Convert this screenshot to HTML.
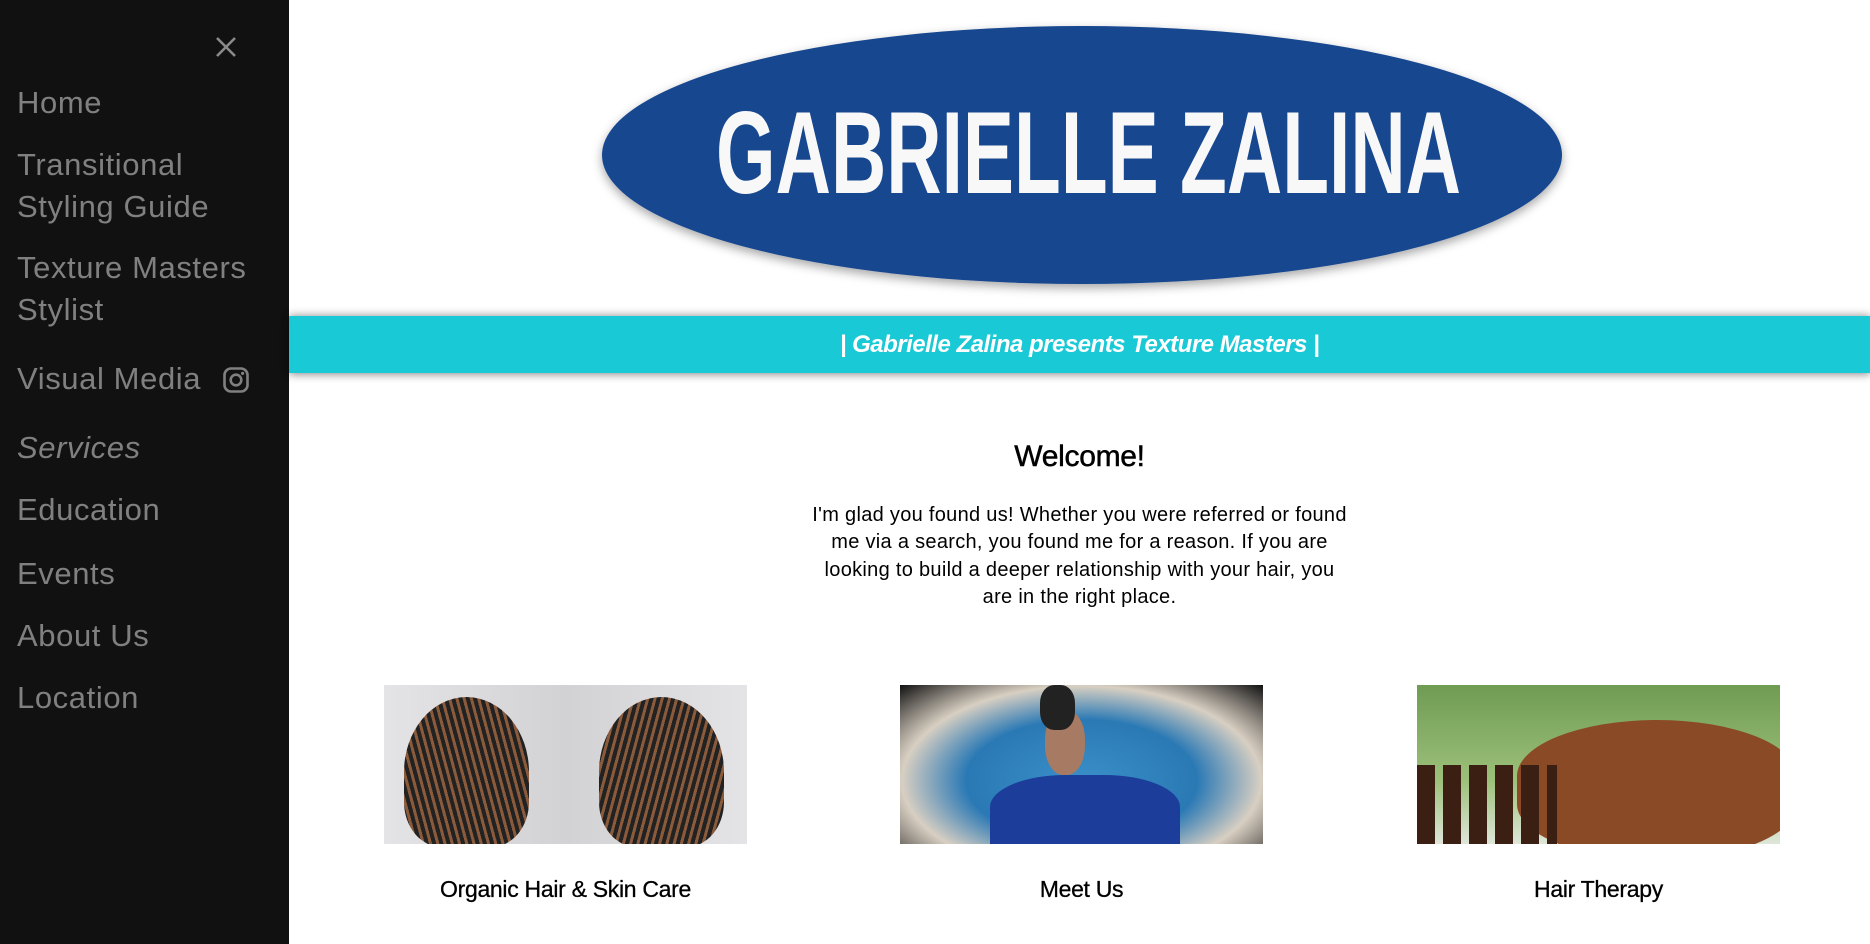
<!DOCTYPE html>
<html><head><meta charset="utf-8"><style>
*{margin:0;padding:0;box-sizing:border-box}
html,body{width:1870px;height:944px;overflow:hidden;background:#fff;font-family:"Liberation Sans",sans-serif}
#side{position:absolute;left:0;top:0;width:289px;height:944px;background:#111}
.m{position:absolute;left:17px;color:#808080;font-size:31px;line-height:42px;white-space:nowrap;letter-spacing:0.6px}
#bar{position:absolute;left:289px;top:316px;width:1581px;height:57px;background:#19c9d6;box-shadow:0 2px 8px rgba(0,0,0,.35),0 -2px 8px rgba(0,0,0,.2);color:#fff;font-style:italic;font-weight:bold;font-size:24px;text-align:center;line-height:57px;letter-spacing:-0.5px}
.c{position:absolute;left:289px;width:1581px;text-align:center;color:#000}
.img{position:absolute;top:685px;width:363px;height:159px;overflow:hidden}
.cap{position:absolute;top:876px;width:363px;text-align:center;font-size:23px;color:#000;letter-spacing:-0.3px;-webkit-text-stroke:0.3px #000}
</style></head><body>
<div id="side">
<svg style="position:absolute;left:215px;top:36px" width="22" height="22" viewBox="0 0 22 22"><path d="M2 2L20 20M20 2L2 20" stroke="#8a8a8a" stroke-width="2.6"/></svg>
<div class="m" style="top:82px">Home</div>
<div class="m" style="top:144px">Transitional<br>Styling Guide</div>
<div class="m" style="top:247px">Texture Masters<br>Stylist</div>
<div class="m" style="top:358px">Visual Media</div>
<svg style="position:absolute;left:223px;top:367px" width="26" height="26" viewBox="0 0 26 26"><rect x="1.5" y="1.5" width="23" height="23" rx="6.5" fill="none" stroke="#808080" stroke-width="2.6"/><circle cx="13" cy="13" r="5.3" fill="none" stroke="#808080" stroke-width="2.6"/><circle cx="19.6" cy="6.4" r="1.6" fill="#808080"/></svg>
<div class="m" style="top:427px;font-style:italic">Services</div>
<div class="m" style="top:489px">Education</div>
<div class="m" style="top:553px">Events</div>
<div class="m" style="top:615px">About Us</div>
<div class="m" style="top:677px">Location</div>
</div>
<svg style="position:absolute;left:590px;top:16px" width="990" height="290" viewBox="0 0 990 290">
<defs><filter id="f" x="-5%" y="-10%" width="110%" height="125%"><feDropShadow dx="0" dy="4" stdDeviation="5" flood-color="#000" flood-opacity="0.35"/></filter></defs>
<ellipse cx="492" cy="139" rx="480" ry="129" fill="#18468f" filter="url(#f)"/>
<text x="126" y="177" font-family="Liberation Sans" font-weight="bold" font-size="117" fill="#f8f8f8" textLength="745" lengthAdjust="spacingAndGlyphs">GABRIELLE ZALINA</text>
</svg>
<div id="bar">| Gabrielle Zalina presents Texture Masters |</div>
<div class="c" style="top:440px;font-size:30px;letter-spacing:-0.3px;-webkit-text-stroke:0.5px #000">Welcome!</div>
<div class="c" style="top:502px;font-size:20px;line-height:27.3px;letter-spacing:0.3px">I'm glad you found us! Whether you were referred or found<br>me via a search, you found me for a reason. If you are<br>looking to build a deeper relationship with your hair, you<br>are in the right place.</div>
<div class="img" style="left:384px;background:linear-gradient(90deg,#e4e4e6,#d2d2d4 50%,#e4e4e6)">
<div style="position:absolute;left:20px;top:12px;width:125px;height:150px;border-radius:50% 50% 30% 30%;background:repeating-linear-gradient(75deg,#222 0 4px,#8a5a3a 4px 7px)"></div>
<div style="position:absolute;left:215px;top:12px;width:125px;height:150px;border-radius:50% 50% 30% 30%;background:repeating-linear-gradient(105deg,#222 0 4px,#8a5a3a 4px 7px)"></div>
</div>
<div class="img" style="left:900px;background:radial-gradient(ellipse at 50% 60%,#3a8fc8 0,#2a79b5 45%,#d8cfc2 70%,#111 100%)">
<div style="position:absolute;left:90px;top:90px;width:190px;height:80px;background:#1c3d9a;border-radius:40% 40% 0 0"></div>
<div style="position:absolute;left:145px;top:25px;width:40px;height:65px;background:#a77b63;border-radius:45%"></div>
<div style="position:absolute;left:140px;top:0;width:35px;height:45px;background:#222;border-radius:40%"></div>
</div>
<div class="img" style="left:1417px;background:linear-gradient(180deg,#6f9b52,#9cc07a 60%,#dfe6d9)">
<div style="position:absolute;left:100px;top:35px;width:280px;height:140px;border-radius:50%/40%;background:#8a4a26"></div>
<div style="position:absolute;left:0;top:80px;width:140px;height:90px;background:repeating-linear-gradient(90deg,#3a1f12 0 18px,transparent 18px 26px)"></div>
</div>
<div class="cap" style="left:384px">Organic Hair &amp; Skin Care</div>
<div class="cap" style="left:900px">Meet Us</div>
<div class="cap" style="left:1417px">Hair Therapy</div>
</body></html>
